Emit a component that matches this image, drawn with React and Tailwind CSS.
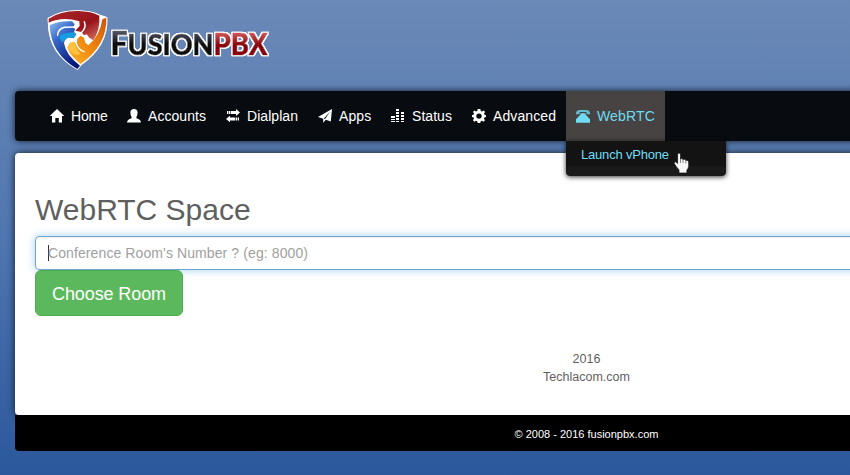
import React from "react";

function Logo() {
  return (
    <svg className="block h-[85px] w-[255px]" viewBox="0 0 255 85">
      <defs>
        <linearGradient id="blue" x1="0" y1="0" x2=".6" y2="1">
          <stop offset="0" stopColor="#8dbdf0" />
          <stop offset=".4" stopColor="#3566c6" />
          <stop offset="1" stopColor="#06187a" />
        </linearGradient>
        <linearGradient id="red" x1="0" y1="0" x2="1" y2="1">
          <stop offset="0" stopColor="#a8262a" />
          <stop offset=".6" stopColor="#98141a" />
          <stop offset="1" stopColor="#d8766c" />
        </linearGradient>
        <linearGradient id="orange" x1="1" y1="0" x2="0" y2="1">
          <stop offset="0" stopColor="#d0540a" />
          <stop offset=".55" stopColor="#ef8a10" />
          <stop offset="1" stopColor="#ffb32c" />
        </linearGradient>
        <linearGradient id="ink" gradientUnits="userSpaceOnUse" x1="0" y1="30" x2="0" y2="55">
          <stop offset="0" stopColor="#5c5d70" />
          <stop offset=".6" stopColor="#08080c" />
        </linearGradient>
        <linearGradient id="wine" gradientUnits="userSpaceOnUse" x1="0" y1="30" x2="0" y2="55">
          <stop offset="0" stopColor="#e06a6c" />
          <stop offset=".6" stopColor="#8c0509" />
        </linearGradient>
        <filter id="halo" x="-20%" y="-20%" width="140%" height="140%">
          <feDropShadow dx="0" dy="0" stdDeviation="0.8" floodColor="#fff" floodOpacity=".8" />
        </filter>
        <filter id="outline" x="-5%" y="-20%" width="110%" height="140%">
          <feMorphology in="SourceAlpha" operator="dilate" radius="1" result="fat" />
          <feGaussianBlur in="fat" stdDeviation="0.7" result="soft" />
          <feFlood floodColor="#fff" />
          <feComposite in2="soft" operator="in" result="glow" />
          <feMerge>
            <feMergeNode in="glow" />
            <feMergeNode in="glow" />
            <feMergeNode in="SourceGraphic" />
          </feMerge>
        </filter>
      </defs>
      <g transform="scale(.33333)">
        <path
          filter="url(#halo)"
          d="M56 56Q94 33 145 34Q184 35 207 46L229 54Q233 136 152 193L142 206Q60 160 57 74Z"
          fill="#fff" stroke="#fff" strokeWidth="6" strokeLinejoin="round"
        />
        <path d="M59 76Q90 61 126 64L134 73L129 83L136 86L132 96L139 103L131 115L116 112Q104 116 102 130Q108 166 150 197L142 207Q62 162 59 76Z" fill="url(#blue)" />
        <path d="M88 110Q97 98 130 97L138 103L130 114Q115 110 104 120L96 128Z" fill="#179ee2" />
        <path d="M56 56Q92 32 145 33Q184 34 208 47Q211 88 190 121L178 113L170 103L162 106L154 96L136 92L149 78L148 64Q98 48 56 68Z" fill="url(#red)" />
        <path d="M229 53Q232 135 152 192Q121 168 112 143L120 128L134 127L140 134L142 116L152 107L162 113L166 128L175 136Q210 108 217 58Z" fill="url(#orange)" />
        <path d="M112 143L120 128L134 127Q139 149 151 160L143 166Q121 160 112 143Z" fill="#ffc23e" />
        <g fill="none" stroke="#fff" strokeWidth="4.5" strokeLinecap="round" strokeLinejoin="round">
          <path d="M83 106Q84 86 104 82L132 81" />
          <path d="M154 98Q170 82 163 65" />
          <path d="M139 130Q143 147 162 155" />
        </g>
      </g>
      <text
        y="54.5" fontFamily="Lato, sans-serif" fontWeight="900" fontSize="29"
        stroke="url(#ink)" strokeWidth=".7" fill="url(#ink)" filter="url(#outline)"
      >
        <tspan x="80.5" fontSize="33" textLength="17" lengthAdjust="spacingAndGlyphs">F</tspan>
        <tspan textLength="86" lengthAdjust="spacingAndGlyphs">USION</tspan>
        <tspan fontSize="31" fill="url(#wine)" stroke="url(#wine)" textLength="54" lengthAdjust="spacingAndGlyphs">PBX</tspan>
      </text>
    </svg>
  );
}

function Glyph({ name }) {
  const art = {
    home: <path d="M7 0L14.3 7H12V13.5H8.8V9H5.3V13.5H2V7H-.3Z" />,
    user: <path d="M7 0Q10.6 0 10.6 3.5Q10.6 6.7 9.4 8V9.2Q14 10.8 14 13.5H0Q0 10.8 4.6 9.2V8Q3.4 6.7 3.4 3.5Q3.4 0 7 0Z" />,
    transfer: <path d="M1 2H2V5H1ZM2.6 2H4V5H2.6ZM4.6 2H10V0L14 3.5L10 7V5H4.6ZM13 8.5H12V11.5H13ZM11.4 8.5H10V11.5H11.4ZM9.4 8.5H4V6.7L0 10L4 13.3V11.5H9.4Z" />,
    plane: <path fillRule="evenodd" d="M14 0L12.8 12.5L7.8 10.8L5.2 13.7V9.8L0 8ZM5.8 9.5L12.2 2.5L7 10Z" />,
    bars: <path d="M5 0H8V2H5ZM5 3H8V5H5ZM10 3H13V5H10ZM5 6H8V8H5ZM10 6H13V8H10ZM0 7H4V9H0ZM0 10H4V11H0ZM5 9H8V11H5ZM10 9H13V11H10ZM0 12H4V13H0ZM5 12H8V13H5ZM10 12H13V13H10Z" />,
    cog: <path fillRule="evenodd" d="M5.7 0H8.3L8.8 2L10 2.5L11.8 1.4L13.1 3L12 4.6L12.4 5.8L14 6.2V8L12.4 8.4L11.9 9.7L13 11.3L11.5 12.8L10 11.8L8.7 12.3L8.3 14H5.7L5.2 12.3L4 11.8L2.3 12.8L1 11.3L2 9.6L1.6 8.4L0 8V6.1L1.6 5.7L2.1 4.5L1 3L2.4 1.4L4 2.5L5.2 2ZM7 4.4A2.7 2.7 0 1 0 7 9.8A2.7 2.7 0 0 0 7 4.4Z" />,
    phone: (
      <>
        <path opacity=".8" d="M0 4.5Q0 1 4 1H10Q14 1 14 4.5V5.2H10.5V3H3.5V5.2H0Z" />
        <path d="M4.5 4.2H9.5V5.5L14 10.2V13.8H0V10.2L4.5 5.5Z" />
      </>
    ),
  };
  return (
    <svg className="-mt-px h-[14px] w-[14px] shrink-0 overflow-visible fill-current" viewBox="0 0 14 14">
      {art[name]}
    </svg>
  );
}

function NavItem({ icon, label, width, tracking = "" }) {
  return (
    <a className={`flex h-[50px] shrink-0 items-center gap-[7px] pl-[10px] whitespace-nowrap ${width}`}>
      <Glyph name={icon} />
      <span className={tracking}>{label}</span>
    </a>
  );
}

function Cursor() {
  return (
    <svg className="absolute top-[11px] left-[107px] h-[22px] w-[18px]" viewBox="0 0 18 22">
      <path
        d="M4.6 2Q6 0 7.5 2V7Q9 6 10 7.5Q12 6.8 12.8 8.3Q15.5 7.8 15.7 10V14.5Q15 17 13.9 18V21H6V18Q3 14.5 1.2 11.5Q1 9.2 3 10L4.6 11.6Z"
        fill="#f7f7f7" stroke="#111" strokeWidth=".7"
      />
      <path d="M7.5 7V11M10 8V11M12.8 8.5V11.5" stroke="#555" strokeWidth=".7" />
    </svg>
  );
}

export default function App() {
  return (
    <div className="h-[475px] w-[850px] overflow-hidden bg-linear-to-b from-[#6b89b7] via-[#4f76af] to-[#2b579c] font-['Liberation_Sans',Arial,sans-serif]">
      <div className="flex w-[1172px] flex-col pl-[15px] pr-[14px]">
        <header className="h-[91px] pl-[15px]">
          <Logo />
        </header>

        <nav className="z-10 flex h-[50px] rounded bg-[#080c11] pl-[25px] text-[14px] text-white shadow-[0_0_7px_#101a28]">
          <NavItem icon="home" label="Home" width="w-[77px]" tracking="tracking-[-0.2px]" />
          <NavItem icon="user" label="Accounts" width="w-[99px]" tracking="tracking-[0.05px]" />
          <NavItem icon="transfer" label="Dialplan" width="w-[92px]" tracking="tracking-[0.05px]" />
          <NavItem icon="plane" label="Apps" width="w-[72px]" tracking="tracking-[0.1px]" />
          <div className="flex w-[82px] shrink-0 pl-px">
            <NavItem icon="bars" label="Status" width="w-[81px]" tracking="tracking-[0.05px]" />
          </div>
          <NavItem icon="cog" label="Advanced" width="w-[104px]" tracking="tracking-[0.1px]" />
          <div className="relative h-[50px] w-[99px] bg-[#464342] text-[#6fdcf4]">
            <NavItem icon="phone" label="WebRTC" width="w-[99px]" tracking="tracking-[0.15px]" />
            <div className="absolute top-[50px] left-0 h-[35px] w-[160px] rounded-b bg-linear-to-b from-[#131313] from-70% to-[#1a1a1a] to-75% pt-[5px] pl-[15px] text-[13px] leading-[18px] tracking-[-0.19px] shadow-[0_1px_5px_rgba(0,0,0,.8)]">
              Launch vPhone
              <Cursor />
            </div>
          </div>
        </nav>

        <main className="mt-3 flex h-[262px] flex-col items-start rounded bg-white px-5 pt-[40px] text-[#5f5f5f] shadow-[0_0_7px_#101a28]">
          <h1 className="h-[43px] text-[30px] leading-[33px]">WebRTC Space</h1>
          <div className="flex h-[34px] w-full shrink-0 items-center rounded border border-[#70a5ce] pl-3 shadow-[inset_0_1px_1px_rgba(0,0,0,.075),0_0_8px_rgba(102,175,233,.6)]">
            <span className="h-4 w-px bg-[#333]" />
            <span className="-ml-px text-[14px] tracking-[0.1px] text-[#a0a0a0]">Conference Room's Number ? (eg: 8000)</span>
          </div>
          <button className="h-[46px] w-[148px] shrink-0 rounded-[6px] border border-[#4cae4c] bg-[#5cb85c] pt-0.5 text-[18px] tracking-[-0.1px] text-white">
            Choose Room
          </button>
          <div className="mt-[34px] w-full text-center text-[12.5px] leading-[18px]">
            <p>2016</p>
            <p>Techlacom.com</p>
          </div>
        </main>
        <footer className="relative flex h-[36px] items-center justify-center rounded-b bg-black pt-[3px] text-[11px] text-white">
          © 2008 - 2016 fusionpbx.com
        </footer>
      </div>
    </div>
  );
}
